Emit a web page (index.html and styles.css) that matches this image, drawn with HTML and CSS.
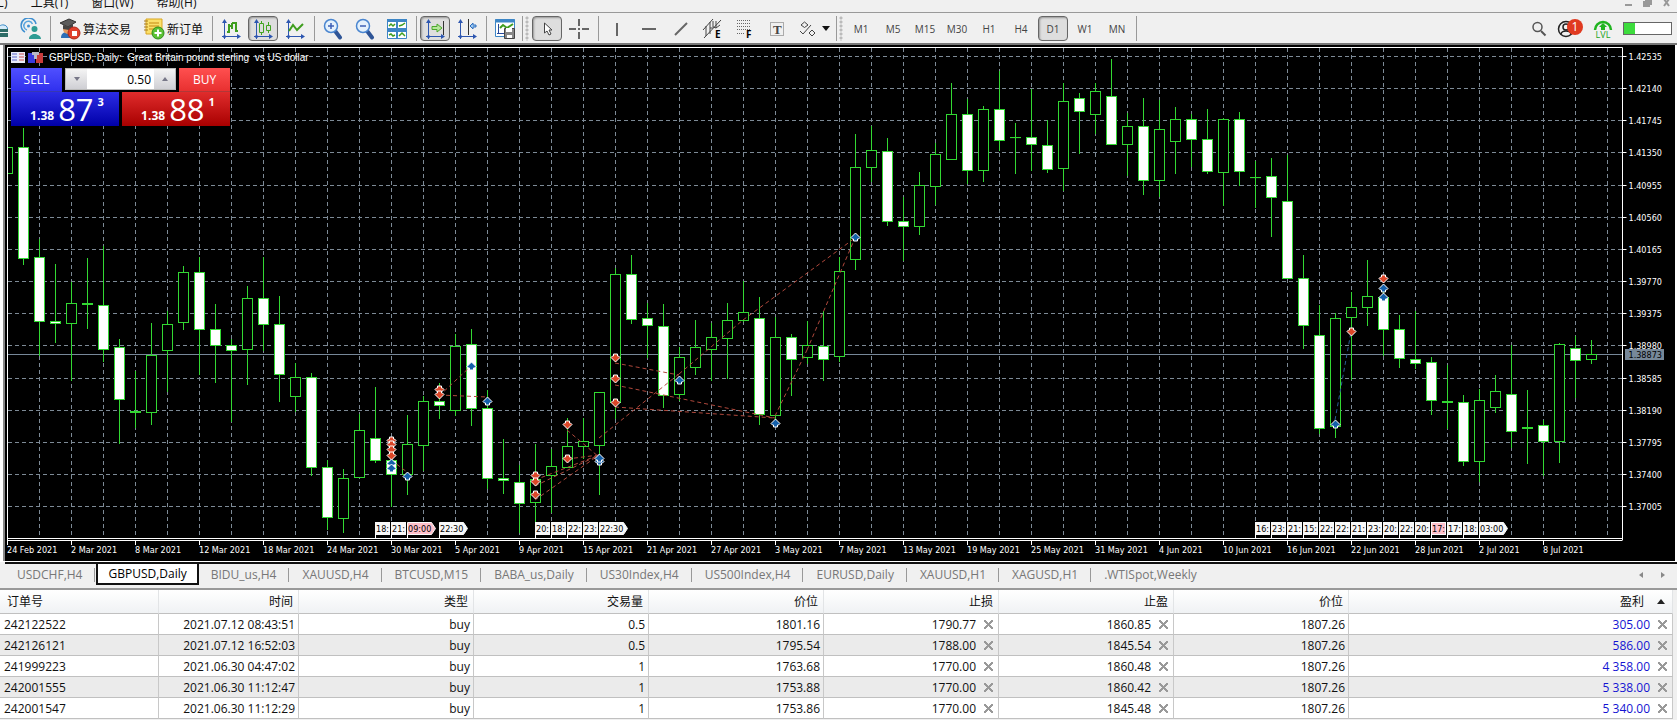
FILE: index.html
```html
<!DOCTYPE html>
<html lang="zh-CN">
  <head>
    <meta charset="UTF-8" />
    <title>GBPUSD,Daily</title>
    <link rel="stylesheet" href="styles.css">
  </head>
  <body>
    <header class="menu-bar">
      <nav class="menu">
        <a href="#">图表(C)</a>
        <a href="#">工具(T)</a>
        <a href="#">窗口(W)</a>
        <a href="#">帮助(H)</a>
      </nav>
      <div class="window-buttons">
        <button aria-label="Minimize"><svg width="9" height="9"><path d="M1 7h7" /></svg></button>
        <button aria-label="Restore"><svg width="9" height="9"><path d="M3 2h5v4H3zM1 4h5v4H1z" /></svg></button>
        <button aria-label="Close"><svg width="9" height="9"><path d="M2 1l5 7M7 1L2 8" /></svg></button>
      </div>
    </header>

    <div class="toolbar">
      <button class="tool first" aria-label="Cloud">
        <svg width="20" height="20"><path d="M9 12a5 5 0 0 1 6-6a4 4 0 0 1 3 6z" fill="#d6ecfa" stroke="#3a8ac8" /><path d="M8 10h11v3H8zM6 14h13v4H6z" fill="#2d6b66" /></svg>
      </button>
      <button class="tool" aria-label="Signals">
        <svg width="22" height="22" fill="none">
          <path d="M5 14A7.500 7.500 0 1 1 16 6" stroke="#3f8fd0" stroke-width="1.500" />
          <path d="M7 12A4.500 4.500 0 1 1 12.500 6" stroke="#5aa6de" stroke-width="1.500" />
          <circle cx="8.500" cy="8" r="1.500" fill="#3f8fd0" />
          <circle cx="14.500" cy="11" r="3" fill="#2f9c94" />
          <path d="M9 21c0-4 3-4 4-5h3c1 1 5 1 5 5z" fill="#2f9c94" />
        </svg>
      </button>
      <span class="sep"></span>
      <button class="tool wide">
        <svg width="22" height="22">
          <path d="M2 20c0-5 3-6 7-6s6 2 6 6z" fill="#2c6fb8" />
          <circle cx="9" cy="11" r="5" fill="#e79b62" />
          <path d="M1 5l9-4 7 3-8 5z" fill="#5c5c5c" stroke="#333" />
          <path d="M4 7v4l6 1 4-3V6l-5 3z" fill="#444" />
          <circle cx="15" cy="15" r="6" fill="#e0402c" stroke="#b02818" />
          <rect x="13" y="13" width="5" height="5" fill="#fff" />
        </svg>
        <span>算法交易</span>
      </button>
      <button class="tool wide">
        <svg width="22" height="22">
          <path d="M3 1h16v15H3z" fill="#fbe06a" stroke="#d9a520" />
          <path d="M6 5h10M6 8h10M6 11h7" stroke="#c48a12" />
          <path d="M1 3h4M1 6h4M1 9h4M1 12h4" stroke="#a77b1d" />
          <circle cx="15" cy="15" r="6" fill="#5cc234" stroke="#2f8d1a" />
          <path d="M15 11.500v7M11.500 15h7" stroke="#fff" stroke-width="2" />
        </svg>
        <span>新订单</span>
      </button>
      <span class="sep"></span>
      <button class="tool" aria-label="Bar chart">
        <svg width="20" height="22" fill="none"><use href="#axes" /><path d="M8 6v9M6 14h2M8 8h2M15 4v10M13 5h2M15 13h2M11 5v6M11 5h2" stroke="#3f9e1f" stroke-width="2" /></svg>
      </button>
      <button class="tool pressed" aria-label="Candlesticks">
        <svg width="20" height="22" fill="none"><use href="#axes" /><path d="M8.500 3v2M8.500 15v2M6.500 5.500h4v9h-4zM15.500 4v3M15.500 12v3M13.500 7.500h4v5h-4z" stroke="#43a522" /></svg>
      </button>
      <button class="tool" aria-label="Line chart">
        <svg width="20" height="22" fill="none"><use href="#axes" /><path d="M4 13l4-6 4 5 6-6" stroke="#3f9e1f" stroke-width="2" /></svg>
      </button>
      <span class="sep"></span>
      <button class="tool" aria-label="Zoom in">
        <svg width="20" height="22" fill="none"><use href="#lens" /><path d="M8 5v6M5 8h6" stroke="#3c5fb5" stroke-width="1.500" /></svg>
      </button>
      <button class="tool" aria-label="Zoom out">
        <svg width="20" height="22" fill="none"><use href="#lens" /><path d="M5 8h6" stroke="#3c5fb5" stroke-width="1.500" /></svg>
      </button>
      <button class="tool" aria-label="Tile windows">
        <svg width="20" height="20" fill="none">
          <path d="M.5.5h19v19H.5z" fill="#fff" stroke="#3d86c6" />
          <path d="M0 1.500h20M0 11.500h20" stroke="#3d86c6" stroke-width="3" />
          <path d="M10 0v20M0 10h20" stroke="#3d86c6" stroke-width="2" />
          <path d="M2 7l2-2 2 2 2-2M12 7l3-1 3-2M2 16l2-1 2 2 2-1M12 17l3-3 3 3" stroke="#3f9e1f" stroke-width="1.500" />
        </svg>
      </button>
      <span class="sep"></span>
      <button class="tool pressed" aria-label="Auto scroll">
        <svg width="20" height="22" fill="none"><use href="#axes" /><path d="M18.500 3v14" stroke="#333" /><path d="M7 8.500h5V6l5 4-5 4v-2.500H7z" fill="#b6e79c" stroke="#4aa82b" /></svg>
      </button>
      <button class="tool" aria-label="Chart shift">
        <svg width="20" height="22" fill="none"><use href="#axes" /><path d="M11.500 1v16" stroke="#333" /><path d="M13 8l3-3v2h3v2h-3v2z" fill="#9cc8f0" stroke="#2f6fbe" /></svg>
      </button>
      <span class="sep"></span>
      <button class="tool" aria-label="Templates">
        <svg width="22" height="22" fill="none">
          <path d="M1.500 1.500h19v17h-19z" fill="#fff" stroke="#3d86c6" /><path d="M1 3h20" stroke="#3d86c6" stroke-width="3" />
          <path d="M4.500 6v10M3 15.500h8" stroke="#274a9c" /><path d="M6 10l3-3 4 3 6-4" stroke="#3f9e1f" stroke-width="2" />
          <path d="M10.500 10.500h10v10h-10z" fill="#888" stroke="#444" /><path d="M12 10h6v4h-6zM13 17h5v3h-5z" fill="#fff" />
        </svg>
      </button>
      <span class="grip"></span>
      <button class="tool pressed" aria-label="Cursor">
        <svg width="20" height="20"><path d="M7.500 4v10l2.500-2 2 4 2-1-2-4h3z" fill="#fff" stroke="#444" /></svg>
      </button>
      <button class="tool line" aria-label="Crosshair">
        <svg width="20" height="20"><path d="M10 0v7M10 13v7M0 10h7M13 10h7M9 10h2" /></svg>
      </button>
      <span class="sep"></span>
      <button class="tool line" aria-label="Vertical line">
        <svg width="20" height="20"><path d="M10 4v13" /></svg>
      </button>
      <button class="tool line" aria-label="Horizontal line">
        <svg width="20" height="20"><path d="M3 10h14" /></svg>
      </button>
      <button class="tool line" aria-label="Trend line">
        <svg width="20" height="20"><path d="M4 16L16 4" /></svg>
      </button>
      <button class="tool line" aria-label="Equidistant channel">
        <svg width="22" height="22"><path class="thin" d="M1 12L11 1M2 20L19 2M4 8v10M8 4v6h3M8 10v6M11 3v6l3 1v-7M14 10l4-3" /><text x="13" y="20">E</text></svg>
      </button>
      <button class="tool line" aria-label="Fibonacci">
        <svg width="22" height="22"><path class="dots" d="M3 2.500h14M3 5.500h14M3 8.500h14M3 11.500h14M3 15.500h8" /><text x="12" y="20">F</text></svg>
      </button>
      <button class="tool line" aria-label="Text label">
        <svg width="20" height="20"><path class="dots" d="M3.500 3.500h13v13h-13z" /><text class="serif" x="6" y="15">T</text></svg>
      </button>
      <button class="tool line objects" aria-label="Objects">
        <svg width="20" height="20"><path class="thin" d="M3 6l3.500-3L10 6 6.500 8.500zM2 12l3 3 8-9M11 14l3-3 3 3-3 3z" /></svg>
        <i class="caret"></i>
      </button>
      <span class="grip"></span>
      <button class="tool">M1</button>
      <button class="tool">M5</button>
      <button class="tool">M15</button>
      <button class="tool">M30</button>
      <button class="tool">H1</button>
      <button class="tool">H4</button>
      <button class="tool pressed">D1</button>
      <button class="tool">W1</button>
      <button class="tool">MN</button>
      <span class="sep"></span>
      <div class="status">
        <button aria-label="Search"><svg width="16" height="16" fill="none" stroke="#555"><circle cx="6.500" cy="6" r="4.500" stroke-width="1.500" /><path d="M10 10l4.500 4.500" stroke-width="2" /></svg></button>
        <button class="account" aria-label="Account">
          <svg width="18" height="18" fill="none" stroke="#222" stroke-width="1.500"><circle cx="9" cy="9" r="7.500" /><circle cx="9" cy="7" r="3" /><path d="M4 14c1-4 9-4 10 0" /></svg>
          <span class="badge">1</span>
        </button>
        <button class="level" aria-label="Level">
          <svg width="20" height="12"><path d="M2 11a8 8 0 0 1 16 0" fill="none" stroke="#21b421" stroke-width="2.500" /><path d="M10 4l4 4h-2v3H8V8H6z" fill="#21b421" /></svg>
          <span>LVL</span>
        </button>
        <div class="meter"><span></span></div>
      </div>
    </div>

    <main class="chart">
      <svg class="plot" id="plot"></svg>
      <div class="chart-title">
        <svg width="14" height="11"><path d="M0 0h14v11H0z" fill="#e8ecf8" /><path d="M1 2h5M1 5h5M1 8h5" stroke="#5a64c8" /><path d="M8 2h5M8 5h5M8 8h5" stroke="#d05050" /></svg>
        <svg width="15" height="11"><path d="M0 1h7v10H0z" fill="#3a3ae0" /><path d="M8 1h7v10H8z" fill="#c83c3c" /><path d="M4 0h7v3H9v4H6V3H4z" fill="#b8b8c8" /></svg>
        <span>GBPUSD, Daily:&nbsp; Great Britain pound sterling&nbsp; vs US dollar</span>
      </div>
      <form class="trade">
        <button type="button" class="side sell">SELL</button>
        <div class="volume">
          <button type="button" aria-label="Less"><i class="down"></i></button>
          <input type="text" value="0.50" aria-label="Volume" />
          <button type="button" aria-label="More"><i class="up"></i></button>
        </div>
        <button type="button" class="side buy">BUY</button>
        <button type="button" class="quote sell-quote"><b>1.38</b><span>87</span><sup>3</sup></button>
        <button type="button" class="quote buy-quote"><b>1.38</b><span>88</span><sup>1</sup></button>
      </form>
    </main>

    <nav class="tabs">
      <a href="#">USDCHF,H4</a>
      <a href="#" class="active">GBPUSD,Daily</a>
      <a href="#">BIDU_us,H4</a>
      <a href="#">XAUUSD,H4</a>
      <a href="#">BTCUSD,M15</a>
      <a href="#">BABA_us,Daily</a>
      <a href="#">US30Index,H4</a>
      <a href="#">US500Index,H4</a>
      <a href="#">EURUSD,Daily</a>
      <a href="#">XAUUSD,H1</a>
      <a href="#">XAGUSD,H1</a>
      <a href="#">.WTISpot,Weekly</a>
      <div class="tab-scroll">
        <button aria-label="Previous tab"><i class="prev"></i></button>
        <button aria-label="Next tab"><i class="next"></i></button>
      </div>
    </nav>

    <div class="orders">
      <table>
        <colgroup>
          <col class="col-id"><col class="col-time"><col><col><col><col><col><col><col class="col-profit">
        </colgroup>
        <thead>
          <tr>
            <th>订单号</th><th>时间</th><th>类型</th><th>交易量</th><th>价位</th><th>止损</th><th>止盈</th><th>价位</th>
            <th class="profit-head">盈利 <i class="sort"></i></th>
          </tr>
        </thead>
        <tbody>
          <tr>
            <td>242122522</td><td>2021.07.12 08:43:51</td><td>buy</td><td>0.5</td><td>1801.16</td>
            <td>1790.77<button class="x" aria-label="Remove"></button></td><td>1860.85<button class="x" aria-label="Remove"></button></td>
            <td>1807.26</td><td class="profit">305.00<button class="x" aria-label="Close"></button></td>
          </tr>
          <tr>
            <td>242126121</td><td>2021.07.12 16:52:03</td><td>buy</td><td>0.5</td><td>1795.54</td>
            <td>1788.00<button class="x" aria-label="Remove"></button></td><td>1845.54<button class="x" aria-label="Remove"></button></td>
            <td>1807.26</td><td class="profit">586.00<button class="x" aria-label="Close"></button></td>
          </tr>
          <tr>
            <td>241999223</td><td>2021.06.30 04:47:02</td><td>buy</td><td>1</td><td>1763.68</td>
            <td>1770.00<button class="x" aria-label="Remove"></button></td><td>1860.48<button class="x" aria-label="Remove"></button></td>
            <td>1807.26</td><td class="profit">4 358.00<button class="x" aria-label="Close"></button></td>
          </tr>
          <tr>
            <td>242001555</td><td>2021.06.30 11:12:47</td><td>buy</td><td>1</td><td>1753.88</td>
            <td>1770.00<button class="x" aria-label="Remove"></button></td><td>1860.42<button class="x" aria-label="Remove"></button></td>
            <td>1807.26</td><td class="profit">5 338.00<button class="x" aria-label="Close"></button></td>
          </tr>
          <tr>
            <td>242001547</td><td>2021.06.30 11:12:29</td><td>buy</td><td>1</td><td>1753.86</td>
            <td>1770.00<button class="x" aria-label="Remove"></button></td><td>1845.48<button class="x" aria-label="Remove"></button></td>
            <td>1807.26</td><td class="profit">5 340.00<button class="x" aria-label="Close"></button></td>
          </tr>
        </tbody>
      </table>
    </div>

    <!-- Shapes shared by the toolbar icons -->
    <svg class="defs" width="0" height="0">
      <defs>
        <g id="axes">
          <path d="M3.500 2v19M1 18.500h18" stroke="#2d56b0" />
          <path d="M1 5l2.500-4L6 5zM16 16l4 2.500-4 2.500z" fill="#2d56b0" />
          <circle cx="3.500" cy="18.500" r="1.500" fill="#2d56b0" />
        </g>
        <g id="lens">
          <path d="M12.500 13.500l4.500 6" stroke="#2f5597" stroke-width="4" stroke-linecap="round" />
          <circle cx="8" cy="8" r="6.500" fill="#e4f1fc" stroke="#4a86d0" stroke-width="1.500" />
        </g>
      </defs>
    </svg>
    <script src="chart.js"></script>
  </body>
</html>
```
FILE: styles.css
```css
* {
  margin: 0;
  padding: 0;
  box-sizing: border-box;
}

body {
  font-family: "Open Sans", "Noto Sans CJK SC", sans-serif;
  font-size: 12px;
  color: #111;
  background: #f0f0f0;
}

button {
  font: inherit;
  color: inherit;
  background: none;
  border: none;
}

a {
  color: inherit;
  text-decoration: none;
}

.defs {
  display: block;
}

/* Menu */
.menu-bar {
  display: flex;
  justify-content: space-between;
  align-items: flex-end;
  height: 13px;
  overflow: hidden;
  border-bottom: 1px solid #999;
}

.menu {
  display: flex;
  gap: 23px;
  line-height: 18px;
  margin-left: -31px;
}

.window-buttons {
  display: flex;
  gap: 10px;
  padding: 0 6px 5px 0;
}

.window-buttons svg {
  display: block;
  fill: none;
  stroke: #999;
  stroke-width: 2;
}

/* Toolbar */
.toolbar {
  display: flex;
  align-items: center;
  gap: 2px;
  padding: 3px 0 2px;
  border-bottom: 2px solid #777;
  overflow: hidden;
}

.tool {
  display: flex;
  justify-content: center;
  align-items: center;
  flex: none;
  width: 30px;
  height: 25px;
  font-size: 10px;
  color: #444;
}

.first {
  margin-left: -16px;
}

.wide {
  width: auto;
  gap: 2px;
  padding: 0 5px;
  font-size: 12px;
  color: #111;
}

.pressed {
  border: 1px solid #666;
  border-radius: 4px;
  background: #dedede;
  box-shadow: inset 1px 1px 2px #999;
}

.sep {
  width: 1px;
  height: 25px;
  margin: 0 1px 0 2px;
  background: #999;
}

.grip {
  width: 8px;
  height: 25px;
  border-left: 1px solid #999;
  background: radial-gradient(circle, #bbb 1px, transparent 2px) 2px 0 / 4px 4px repeat-y;
}

.line path {
  fill: none;
  stroke: #666;
  stroke-width: 2;
}

.line .thin {
  stroke-width: 1;
  stroke: #444;
}

.line .dots {
  stroke-width: 1;
  stroke-dasharray: 1 1;
}

.line text {
  font-size: 10px;
  font-weight: bold;
  fill: #000;
}

.line .serif {
  font-family: "Liberation Serif", serif;
  font-size: 13px;
  fill: #444;
}

.objects {
  width: 40px;
  gap: 4px;
}

.caret {
  border: 4px solid transparent;
  border-top: 5px solid #111;
  border-bottom: none;
}

.status {
  display: flex;
  align-items: center;
  gap: 10px;
  margin-left: auto;
  padding-right: 5px;
}

.status svg {
  display: block;
}

.account {
  position: relative;
  width: 26px;
}

.badge {
  position: absolute;
  top: -1px;
  right: 0;
  width: 16px;
  height: 16px;
  border-radius: 50%;
  background: #e03a20;
  color: #fff;
  line-height: 16px;
}

.level span {
  display: block;
  font-size: 9px;
  line-height: 8px;
  color: #21a421;
}

.meter {
  width: 49px;
  height: 13px;
  border: 1px solid #666;
  background: #fff;
}

.meter span {
  display: block;
  width: 24%;
  height: 100%;
  background: #3ddc3d;
}

/* Chart */
.chart {
  position: relative;
  height: 517px;
  padding: 0 2px 1px 0;
  border-left: 3px solid #fff;
  background: #fff;
}

.plot {
  display: block;
  width: 100%;
  height: 100%;
  border-left: 2px solid #888;
  background: #000;
  font-family: "DejaVu Sans Condensed", "Open Sans", sans-serif;
  font-size: 9px;
}

.grid {
  stroke: #7d8a96;
  stroke-dasharray: 4 3;
}

.frame {
  fill: none;
  stroke: #fff;
}

.candle {
  fill: #000;
  stroke: #32d832;
}

.candle.down {
  fill: #fff;
}

.bid {
  stroke: #778899;
}

.bid-box {
  fill: #778899;
}

.axis {
  fill: #fff;
}

.deal {
  fill: none;
  stroke: #b0483c;
  stroke-dasharray: 4 3;
}

.deal.long {
  stroke: #2c5a94;
}

.mark {
  fill: #dc4628;
  stroke: #fff;
}

.mark.long {
  fill: #1460aa;
}

.event {
  fill: #f8f8f8;
  stroke: #f8f8f8;
}

.event.holiday {
  fill: #ffc0cb;
}

.event-edge {
  stroke: #000;
}

.chart-title {
  position: absolute;
  top: 5px;
  left: 8px;
  display: flex;
  align-items: center;
  gap: 3px;
  color: #fff;
  font-family: "Liberation Sans", sans-serif;
  font-size: 10px;
  line-height: 15px;
}

.chart-title span {
  margin-left: 3px;
}

.trade {
  position: absolute;
  top: 23px;
  left: 8px;
  display: grid;
  grid-template-columns: 51px 57px 57px 51px;
  grid-template-rows: 24px 34px;
  column-gap: 1px;
  background: #000;
}

.side {
  color: #fff;
  border-bottom: 1px solid rgba(0, 0, 0, 0.3);
}

.sell {
  background: linear-gradient(#5050ff, #3030ee);
}

.buy {
  background: linear-gradient(#ff5050, #e83030);
}

.volume {
  grid-column: 2 / 4;
  display: flex;
  height: 22px;
  margin: 0 2px;
  border: 1px solid #bbb;
}

.volume button {
  display: flex;
  justify-content: center;
  align-items: center;
  width: 21px;
  background: linear-gradient(#f4f4f4, #cfcfd4);
}

.volume input {
  flex: 1;
  min-width: 0;
  padding: 0 3px;
  border: none;
  font: inherit;
  text-align: right;
}

.down,
.up,
.sort {
  display: inline-block;
  border: 3px solid transparent;
}

.down {
  border-top: 4px solid #778;
  border-bottom: none;
}

.up {
  border-bottom: 4px solid #778;
  border-top: none;
}

.quote {
  grid-column: span 2;
  display: flex;
  justify-content: center;
  align-items: flex-end;
  gap: 4px;
  padding-left: 4px;
  color: #fff;
  line-height: 16px;
}

.sell-quote {
  margin-right: 1px;
  background: linear-gradient(#2c2ce4, #0000a8);
}

.buy-quote {
  margin-left: 1px;
  background: linear-gradient(#e02c2c, #a80000);
}

.quote b {
  padding-bottom: 2px;
}

.quote span {
  font-size: 31px;
  line-height: 34px;
}

.quote sup {
  align-self: flex-start;
  padding-top: 2px;
  font-size: 11px;
  font-weight: bold;
}

/* Chart tabs */
.tabs {
  display: flex;
  margin-left: 5px;
  height: 23px;
  border-top: 2px solid #111;
  color: #777;
}

.tabs a {
  height: 21px;
  padding: 0 13px 0 12px;
  line-height: 21px;
  border-right: 1px solid transparent;
  background: linear-gradient(#999, #999) right center / 1px 14px no-repeat;
}

.tabs a:nth-of-type(12) {
  background: none;
}

.tabs .active {
  padding: 0 10px;
  border: 2px solid #111;
  border-top: none;
  background: #fff;
  color: #000;
  line-height: 19px;
}

.tab-scroll {
  display: flex;
  align-items: center;
  gap: 18px;
  margin-left: auto;
  padding-right: 12px;
}

.prev,
.next {
  display: block;
  border: 3px solid transparent;
}

.prev {
  border-right: 4px solid #888;
  border-left: none;
}

.next {
  border-left: 4px solid #888;
  border-right: none;
}

/* Orders table */
.orders {
  margin-top: 3px;
  padding-right: 4px;
  border-top: 2px solid #999;
}

table {
  width: 100%;
  table-layout: fixed;
  border-collapse: separate;
  border-spacing: 0;
  background: #fff;
}

col {
  width: 175px;
}

.col-id {
  width: 159px;
}

.col-time {
  width: 140px;
}

.col-profit {
  width: auto;
}

th,
td {
  height: 21px;
  padding: 1px 3px 0;
  line-height: 18px;
  text-align: right;
  border-right: 1px solid #c8c8c8;
  border-bottom: 1px solid #c0c0c0;
}

th {
  height: 24px;
  padding: 0 5px;
  font-weight: normal;
  background: linear-gradient(#fff, #f0f2f4);
  border-right-color: #e2e4e6;
}

th:first-child {
  padding-left: 7px;
  text-align: left;
}

td:first-child {
  padding-left: 4px;
  text-align: left;
}

tbody tr:nth-child(even) {
  background: #ebebeb;
}

td.profit {
  color: #1414d2;
}

.profit-head {
  padding-right: 7px;
}

.sort {
  margin-left: 10px;
  border: 4px solid transparent;
  border-bottom: 5px solid #222;
  border-top: none;
  vertical-align: 2px;
}

.x {
  width: 9px;
  height: 9px;
  margin: 0 2px 0 8px;
  background:
    linear-gradient(45deg, transparent 42%, #999 42% 58%, transparent 58%),
    linear-gradient(-45deg, transparent 42%, #999 42% 58%, transparent 58%);
}
```
FILE: chart.js
```js
const NS = "http://www.w3.org/2000/svg";
const plot = document.getElementById("plot");
const LEFT = 5;
const TOP = 45;
const STEP = 16; // distance between two bars
const START = 7; // centre of the first bar

// [high, body top, body bottom, low, 1 = falling bar]
const bars = [
  [147, 147, 173, 173, 0], [128, 147, 258, 264, 1], [239, 257, 321, 355, 1], [264, 321, 323, 342, 1],
  [282, 303, 323, 380, 0], [258, 303, 304, 328, 0], [246, 305, 349, 361, 1], [339, 347, 399, 443, 1],
  [371, 411, 412, 427, 0], [323, 355, 412, 424, 0], [311, 324, 350, 391, 0], [266, 272, 322, 329, 0],
  [257, 272, 329, 374, 1], [304, 329, 345, 382, 1], [339, 345, 350, 421, 1], [286, 298, 349, 384, 0],
  [257, 298, 324, 350, 1], [296, 324, 374, 401, 1], [363, 377, 396, 411, 0], [373, 377, 467, 475, 1],
  [460, 467, 517, 529, 1], [469, 478, 518, 532, 0], [414, 430, 477, 477, 0], [387, 438, 460, 462, 1],
  [437, 460, 474, 506, 1], [415, 444, 474, 494, 0], [396, 401, 445, 470, 0], [383, 401, 405, 418, 1],
  [334, 346, 410, 415, 0], [329, 344, 408, 425, 1], [390, 408, 478, 488, 1], [439, 478, 480, 493, 1],
  [465, 482, 503, 532, 1], [444, 479, 502, 521, 0], [449, 466, 475, 512, 0], [418, 446, 467, 467, 0],
  [418, 441, 446, 458, 0], [392, 392, 445, 494, 0], [268, 274, 402, 418, 0], [255, 274, 319, 323, 1],
  [303, 318, 325, 357, 1], [304, 326, 395, 407, 1], [347, 357, 394, 400, 0], [320, 347, 367, 374, 0],
  [323, 337, 349, 380, 0], [303, 320, 338, 378, 0], [281, 312, 320, 321, 0], [297, 318, 414, 424, 1],
  [317, 337, 415, 418, 0], [334, 337, 359, 395, 1], [321, 345, 357, 363, 0], [311, 346, 359, 380, 1],
  [257, 271, 356, 361, 0], [134, 167, 259, 269, 0], [126, 150, 167, 181, 0], [138, 151, 221, 225, 1],
  [197, 221, 226, 260, 1], [172, 185, 226, 234, 0], [143, 154, 186, 204, 0], [83, 114, 159, 159, 0],
  [99, 114, 170, 183, 1], [106, 109, 170, 181, 0], [71, 109, 140, 150, 1], [123, 137, 137, 173, 0],
  [89, 137, 144, 170, 1], [120, 145, 169, 172, 1], [83, 101, 168, 190, 0], [93, 98, 111, 153, 1],
  [83, 91, 114, 133, 0], [59, 96, 144, 144, 1], [113, 126, 144, 175, 0], [98, 126, 180, 194, 1],
  [100, 129, 180, 196, 0], [107, 119, 141, 173, 0], [114, 119, 139, 166, 1], [109, 139, 171, 173, 1],
  [118, 119, 172, 205, 0], [112, 119, 171, 185, 1], [161, 177, 177, 207, 0], [158, 176, 197, 236, 1],
  [155, 201, 278, 278, 1], [255, 278, 325, 348, 1], [305, 335, 428, 433, 1], [313, 318, 426, 437, 0],
  [292, 307, 317, 379, 0], [260, 296, 307, 325, 0], [285, 297, 329, 355, 1], [315, 329, 358, 367, 1],
  [311, 359, 363, 368, 1], [357, 362, 400, 414, 1], [365, 401, 402, 428, 1], [395, 402, 461, 465, 1],
  [389, 400, 461, 481, 0], [375, 391, 407, 412, 0], [345, 394, 431, 447, 1], [390, 427, 428, 463, 0],
  [420, 425, 441, 475, 1], [343, 344, 441, 462, 0], [336, 348, 360, 397, 1], [340, 354, 359, 363, 0],
];

const prices = ["1.42535", "1.42140", "1.41745", "1.41350", "1.40955", "1.40560", "1.40165",
  "1.39770", "1.39375", "1.38980", "1.38585", "1.38190", "1.37795", "1.37400", "1.37005"];
const dates = ["24 Feb", "2 Mar", "8 Mar", "12 Mar", "18 Mar", "24 Mar", "30 Mar", "5 Apr", "9 Apr",
  "15 Apr", "21 Apr", "27 Apr", "3 May", "7 May", "13 May", "19 May", "25 May", "31 May", "4 Jun",
  "10 Jun", "16 Jun", "22 Jun", "28 Jun", "2 Jul", "8 Jul"];

const deals = [
  [439, 396, 471, 366], [439, 395, 487, 397], [391, 460, 407, 472], [535, 480, 599, 455],
  [535, 486, 599, 455], [535, 500, 599, 455], [567, 459, 599, 455], [567, 430, 599, 457],
  [615, 363, 679, 375], [615, 385, 775, 418], [615, 407, 775, 418], [599, 438, 679, 374],
  [679, 374, 743, 320], [743, 320, 855, 238], [775, 416, 807, 350], [807, 350, 855, 238],
  [1335, 420, 1351, 332, 1],
];
const marks = [
  [391, 441], [391, 445], [391, 450], [391, 456], [391, 463, 1], [391, 468, 1], [407, 476, 1],
  [439, 390], [439, 395], [471, 366, 1], [487, 401, 1], [535, 476], [535, 482], [535, 495],
  [567, 425], [567, 459], [599, 461, 1], [599, 458, 1], [615, 358], [615, 379], [615, 403],
  [679, 380, 1], [775, 423, 1], [855, 237, 1], [1335, 424, 1], [1351, 332], [1383, 279],
  [1383, 288, 1], [1383, 297, 1],
];
// Economic calendar flags: first bar x, then the times
const events = [
  [375, ["18:", "21:", "*09:00", "", "22:30"]],
  [535, ["20:", "18:", "22:", "23:", "22:30"]],
  [1255, ["16:", "23:", "21:", "15:", "22:", "22:", "21:", "23:", "20:", "22:", "20:", "*17:", "17:", "18:", "03:00"]],
];

function add(tag, attrs, text) {
  const el = document.createElementNS(NS, tag);
  for (const name in attrs) el.setAttribute(name, attrs[name]);
  if (text) el.textContent = text;
  plot.appendChild(el);
}

function line(cls, x1, y1, x2, y2) {
  add("path", { class: cls, d: `M${x1} ${y1}L${x2} ${y2}` });
}

function draw() {
  const w = plot.clientWidth;
  const h = plot.clientHeight;
  const right = LEFT + w - 52.5;
  plot.innerHTML = "";
  plot.setAttribute("viewBox", `${LEFT} ${TOP} ${w} ${h}`);

  prices.forEach((p, i) => {
    const y = Math.round(56 + i * 32.15) + 0.5;
    line("grid", 8, y, right, y);
    line("frame", right, y, right + 4, y);
    add("text", { class: "axis", x: right + 6, y: y + 3.5 }, p);
  });
  for (let x = START + 32.5; x < right; x += 32) line("grid", x, 48, x, 538);
  line("bid", 8, 354.5, right, 354.5);

  bars.forEach(([high, top, bottom, low, down], i) => {
    const x = START + i * STEP + 0.5;
    const cls = down ? "candle down" : "candle";
    line(cls, x, high, x, low + 1);
    add("rect", { class: cls, x: i ? x - 5 : x, y: top + 0.5, width: i ? 10 : 5, height: bottom - top || 0.1 });
  });

  deals.forEach(([x1, y1, x2, y2, long]) => line(long ? "deal long" : "deal", x1, y1, x2, y2));
  marks.forEach(([x, y, long]) => {
    const d = long
      ? `M${x + 0.5} ${y - 4}l4.500 4.500l-1.500 1.500h-1v2h-4v-2h-1l-1.500 -1.500z`
      : `M${x + 0.5} ${y + 4}l4.500 -4.500l-1.500 -1.500h-1v-2h-4v2h-1l-1.500 1.500z`;
    add("path", { class: long ? "mark long" : "mark", d });
  });

  events.forEach(([x, times]) => {
    times.forEach((t, i) => {
      const left = x + i * STEP;
      const holiday = t[0] === "*";
      const label = t.replace("*", "");
      if (!label) return;
      if (label.length > 3) {
        add("path", { class: holiday ? "event holiday" : "event", d: `M${left + 0.5} 522.500h24l4 6-4 6h-24z` });
      } else {
        add("rect", { class: holiday ? "event holiday" : "event", x: left + 0.5, y: 522.5, width: 14, height: 12 });
      }
      line("frame", left + 0.5, 534, left + 0.5, 538);
      add("text", { x: left + 1, y: 532 }, label);
      if (i) line("event-edge", left - 0.5, 522, left - 0.5, 535);
    });
  });

  add("path", { class: "frame", d: `M7.500 540V47.500H${right}V540M7 538.500H${right}M7 540.500H${right}` });
  dates.forEach((d, i) => {
    const x = START + i * 64;
    line("frame", x + 0.5, 540, x + 0.5, 545);
    add("text", { class: "axis", x, y: 553 }, d + " 2021");
  });

  add("rect", { class: "bid-box", x: right + 2.5, y: 349, width: 39, height: 11 });
  add("text", { x: right + 6, y: 358 }, "1.38873");
}

draw();
window.addEventListener("resize", draw);
```
